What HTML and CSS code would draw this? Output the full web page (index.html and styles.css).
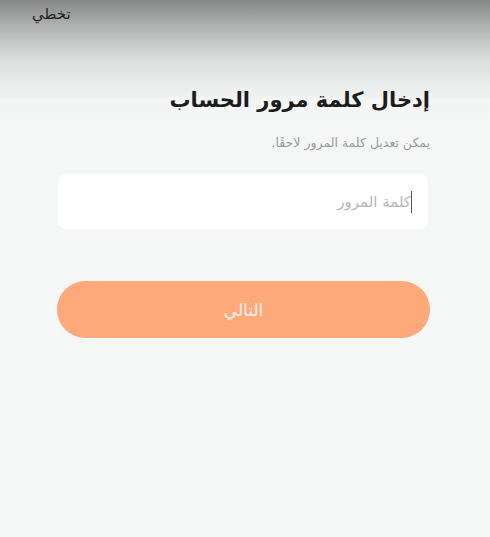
FILE: index.html
```html
<!DOCTYPE html>
<html lang="ar" dir="rtl">
<head>
<meta charset="utf-8">
<link rel="stylesheet" href="styles.css">
</head>
<body>
<div class="screen">
  <div class="topbar">
    <span class="skip">تخطي</span>
  </div>
  <div class="content">
    <h1 class="title">إدخال كلمة مرور الحساب</h1>
    <p class="subtitle">يمكن تعديل كلمة المرور لاحقًا.</p>
    <div class="field">
      <span class="caret"></span><span class="placeholder">كلمة المرور</span>
    </div>
    <button class="next">التالي</button>
  </div>
</div>
</body>
</html>
```
FILE: styles.css
```css
* { box-sizing: border-box; }
html, body {
  margin: 0;
  padding: 0;
  width: 490px;
  height: 537px;
  overflow: hidden;
}
body {
  font-family: "DejaVu Sans", sans-serif;
  background: #f5f6f6;
}
.screen {
  height: 537px;
  background: linear-gradient(to bottom, #868787 0px, #b3b4b4 28px, #dcdddd 60px, #f3f4f4 100px, #f5f6f6 120px, #f5f6f6 100%);
  display: flex;
  flex-direction: column;
}
.topbar {
  height: 30px;
  display: flex;
  justify-content: flex-end;
  padding: 4px 0 0 32px;
}
.skip {
  font-size: 15px;
  color: #222;
  line-height: 20px;
}
.content {
  padding: 52px 60px 0 60px;
  display: flex;
  flex-direction: column;
}
.title {
  margin: 0;
  font-size: 21px;
  font-weight: bold;
  color: #1c1c1c;
  line-height: 36px;
}
.subtitle {
  margin: 16px 0 0;
  font-size: 12.5px;
  color: #9a9a9a;
  line-height: 18px;
}
.field {
  margin: 22px 2px 0 -2px;
  height: 55px;
  background: #ffffff;
  border-radius: 8px;
  display: flex;
  align-items: center;
  padding-right: 16px;
}
.caret {
  width: 1px;
  height: 22px;
  background: #555;
}
.placeholder {
  font-size: 15px;
  color: #b8b8b8;
}
.next {
  margin: 52px 0 0 -3px;
  height: 57px;
  border: none;
  border-radius: 29px;
  background: #fea97a;
  color: #fff3ea;
  font-family: "DejaVu Sans", sans-serif;
  font-size: 17px;
}
```
